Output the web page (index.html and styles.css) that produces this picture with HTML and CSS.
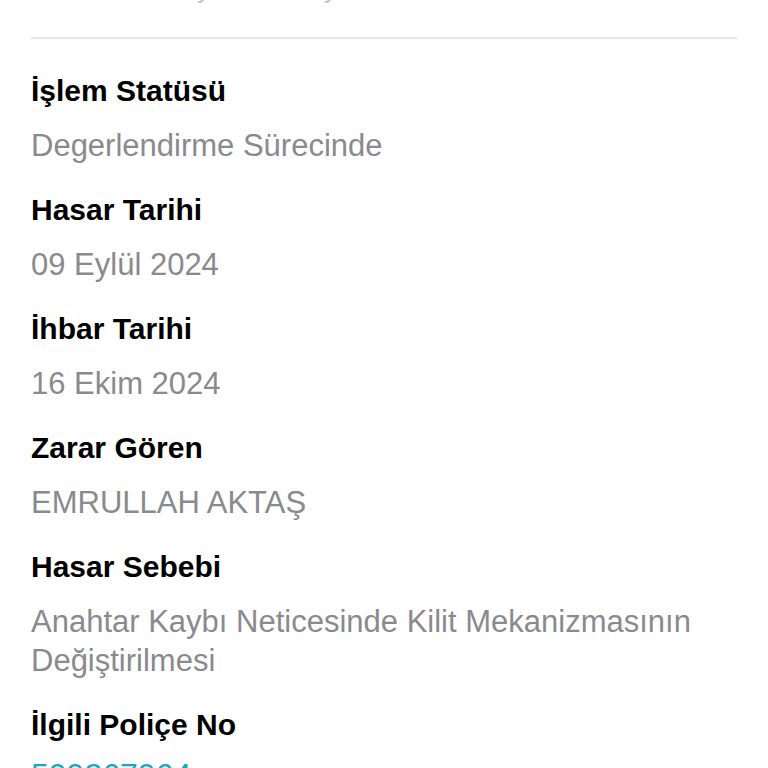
FILE: index.html
```html
<!DOCTYPE html>
<html lang="tr">
<head>
<meta charset="utf-8">
<link rel="stylesheet" href="styles.css">
</head>
<body>
<div class="page">
  <div class="top-text">Hasar Dosyası Detayı</div>
  <div class="divider"></div>
  <div class="fields">
    <div class="field">
      <div class="label">İşlem Statüsü</div>
      <div class="value">Degerlendirme Sürecinde</div>
    </div>
    <div class="field">
      <div class="label">Hasar Tarihi</div>
      <div class="value">09 Eylül 2024</div>
    </div>
    <div class="field">
      <div class="label">İhbar Tarihi</div>
      <div class="value">16 Ekim 2024</div>
    </div>
    <div class="field">
      <div class="label">Zarar Gören</div>
      <div class="value">EMRULLAH AKTAŞ</div>
    </div>
    <div class="field">
      <div class="label">Hasar Sebebi</div>
      <div class="value">Anahtar Kaybı Neticesinde Kilit Mekanizmasının Değiştirilmesi</div>
    </div>
    <div class="field">
      <div class="label">İlgili Poliçe No</div>
      <div class="value link">599267964</div>
    </div>
  </div>
</div>
</body>
</html>
```

FILE: styles.css
```css
html, body {
  margin: 0;
  padding: 0;
  background: #ffffff;
  overflow: hidden;
}
body {
  font-family: "Liberation Sans", Arial, sans-serif;
  -webkit-font-smoothing: antialiased;
}
.page {
  padding: 0 31px;
  height: 768px;
  overflow: hidden;
}
.top-text {
  font-size: 30px;
  line-height: 38px;
  color: #c8c8cc;
  margin-top: -32px;
  padding-left: 24px;
}
.divider {
  height: 2px;
  background: #e6e6e8;
  margin-top: 31px;
}
.fields {
  display: flex;
  flex-direction: column;
  gap: 26px;
  margin-top: 33px;
}
.field {
  display: flex;
  flex-direction: column;
  gap: 16px;
}
.label {
  font-size: 30px;
  line-height: 38px;
  font-weight: 700;
  color: #000000;
}
.value {
  font-size: 31px;
  line-height: 39px;
  color: #8a8a8e;
}
.value.link {
  color: #22a2c6;
  font-size: 32px;
  margin-top: -4px;
}
```
